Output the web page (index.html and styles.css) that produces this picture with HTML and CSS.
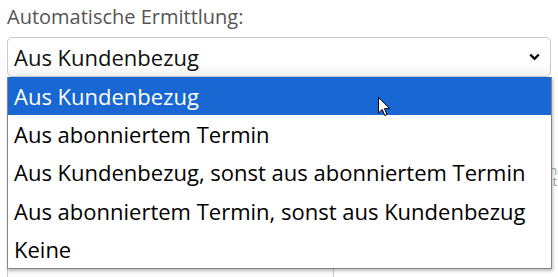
FILE: index.html
```html
<!DOCTYPE html>
<html lang="de">
<head>
    <meta charset="UTF-8">
    <meta name="viewport" content="width=device-width, initial-scale=1.0">
    <title>Automatische Ermittlung</title>
    <link rel="stylesheet" href="styles.css">
</head>
<body>
    <div class="field">
        <label class="field-label" for="ermittlung">Automatische Ermittlung:</label>
        <div class="select" id="ermittlung">
            <span class="select-value">Aus Kundenbezug</span>
            <svg class="chevron" width="11" height="8" viewBox="0 0 11 8">
                <path d="M1.2 1.5 L5.5 5.8 L9.8 1.5" fill="none" stroke="#000" stroke-width="2.3"/>
            </svg>
        </div>

        <ul class="dropdown">
            <li class="option selected">Aus Kundenbezug</li>
            <li class="option">Aus abonniertem Termin</li>
            <li class="option">Aus Kundenbezug, sonst aus abonniertem Termin</li>
            <li class="option">Aus abonniertem Termin, sonst aus Kundenbezug</li>
            <li class="option">Keine</li>
        </ul>

        <p class="hint">Termin<br>geplant</p>

        <div class="next-input"></div>
    </div>

    <!-- mouse pointer over the first option -->
    <svg class="cursor" width="13" height="20" viewBox="0 0 13 20">
        <path d="M0.5 0.5 L0.5 16 L4.2 12.4 L6.8 18.5 L9 17.6 L6.5 11.6 L11.5 11.6 Z" fill="#fff" stroke="#000" stroke-width="1"/>
    </svg>
</body>
</html>
```

FILE: styles.css
```css
body {
    font-family: "Open Sans", "Liberation Sans", sans-serif;
    margin: 0;
    padding: 4px 0 0 7px;
    background-color: #fff;
    overflow: hidden;
    height: 277px;
    box-sizing: border-box;
}

.field {
    position: relative;
}

.field-label {
    display: block;
    font-size: 20px;
    line-height: 26px;
    color: #555;
    margin-bottom: 7px;
}

.select {
    display: flex;
    align-items: center;
    justify-content: space-between;
    width: 544px;
    height: 40px;
    box-sizing: border-box;
    padding: 0 10px 0 6px;
    border: 1px solid #c6c8ca;
    border-radius: 5px;
    background: linear-gradient(#fff 70%, #f1f1f1);
    font-size: 22px;
    color: #111;
}

.chevron {
    display: block;
}

.dropdown {
    position: absolute;
    top: 73px;
    left: 0;
    width: 543px;
    margin: 0;
    padding: 0;
    list-style: none;
    background-color: #fff;
    border: 1px solid #858585;
    border-top: none;
    box-shadow: 1px 2px 3px rgba(0, 0, 0, 0.25);
    z-index: 2;
}

.option {
    font-size: 22px;
    line-height: 38px;
    height: 38.2px;
    padding: 0 6px;
    color: #000;
}

.option.selected {
    background-color: #1967d2;
    color: #fff;
}

.hint {
    margin: 88px 0 0 0;
    font-size: 12px;
    line-height: 11px;
    color: #999;
    text-align: right;
    padding-right: 1px;
}

.next-input {
    margin-top: 70px;
    width: 325px;
    height: 30px;
    border: 1px solid #c6c8ca;
    border-radius: 5px;
    background: linear-gradient(#f7f7f7, #fff);
}

.cursor {
    position: absolute;
    left: 378px;
    top: 97px;
    z-index: 3;
}
```
